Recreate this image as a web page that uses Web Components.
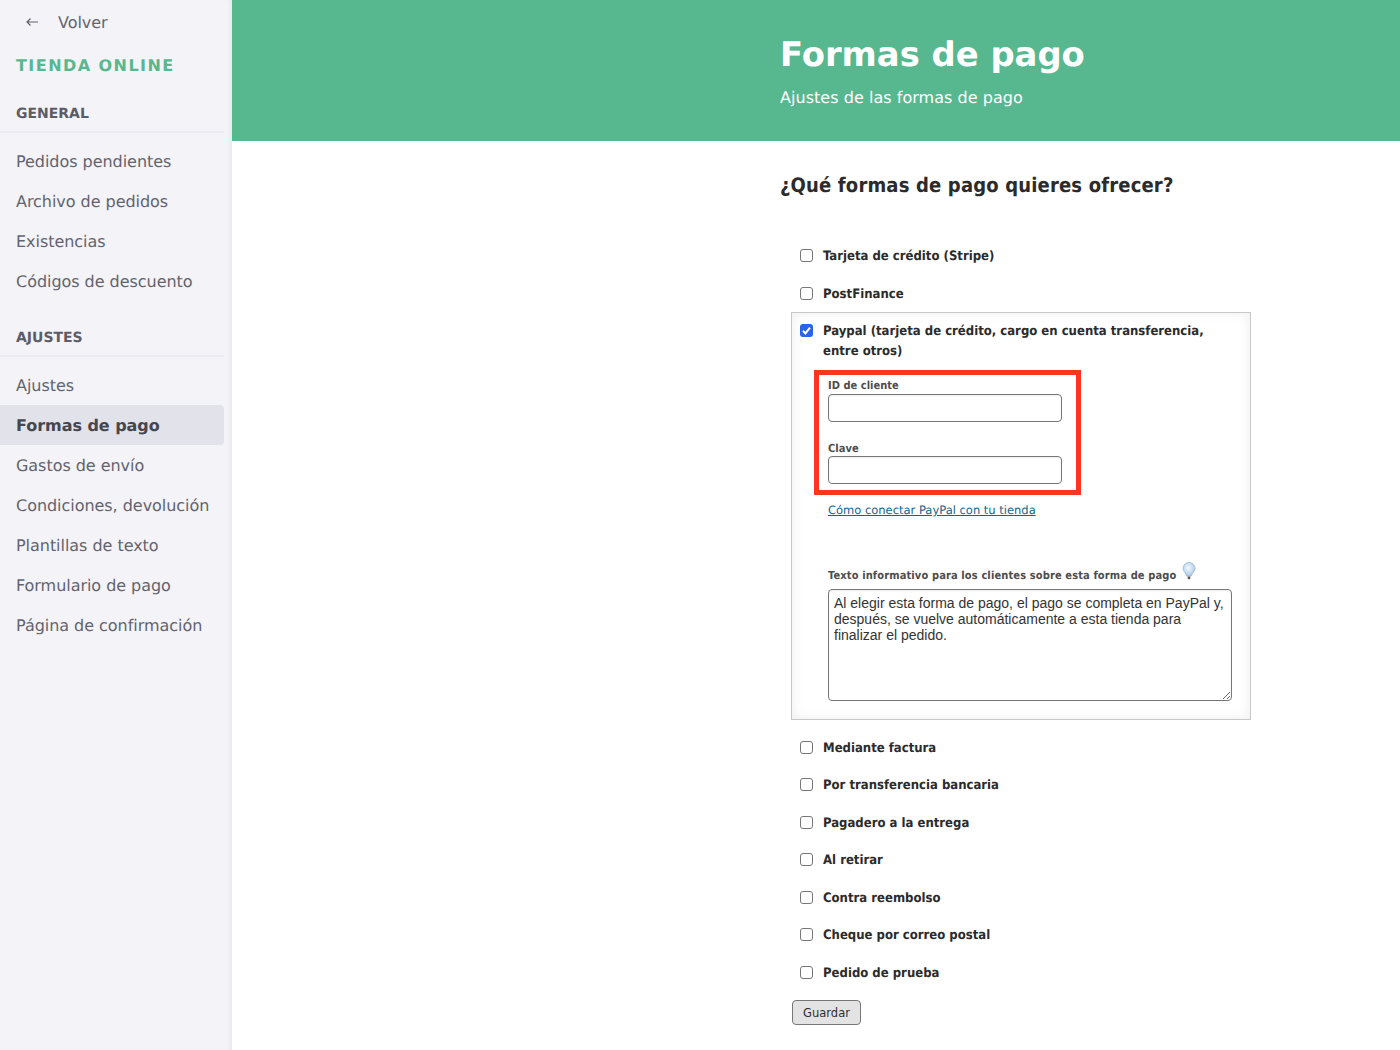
<!DOCTYPE html>
<html lang="es">
<head>
<meta charset="utf-8">
<title>Formas de pago</title>
<style>
  html, body { margin: 0; height: 100%; }
  body { font-family: "DejaVu Sans", sans-serif; text-rendering: geometricPrecision; background: #fff; overflow: hidden; }
  shop-app { height: 1050px; }
</style>
</head>
<body>
<shop-app>
  <shop-sidebar slot="sidebar">
    <back-link>Volver</back-link>
    <shop-brand>TIENDA ONLINE</shop-brand>
    <nav-section title="GENERAL">
      <nav-item>Pedidos pendientes</nav-item>
      <nav-item>Archivo de pedidos</nav-item>
      <nav-item>Existencias</nav-item>
      <nav-item>Códigos de descuento</nav-item>
    </nav-section>
    <nav-section title="AJUSTES">
      <nav-item>Ajustes</nav-item>
      <nav-item active>Formas de pago</nav-item>
      <nav-item>Gastos de envío</nav-item>
      <nav-item>Condiciones, devolución</nav-item>
      <nav-item>Plantillas de texto</nav-item>
      <nav-item>Formulario de pago</nav-item>
      <nav-item>Página de confirmación</nav-item>
    </nav-section>
  </shop-sidebar>
  <page-header slot="header" title="Formas de pago" subtitle="Ajustes de las formas de pago"></page-header>
  <payment-form slot="content">
    <pay-option>Tarjeta de crédito (Stripe)</pay-option>
    <pay-option>PostFinance</pay-option>
    <paypal-panel></paypal-panel>
    <pay-option>Mediante factura</pay-option>
    <pay-option>Por transferencia bancaria</pay-option>
    <pay-option>Pagadero a la entrega</pay-option>
    <pay-option>Al retirar</pay-option>
    <pay-option>Contra reembolso</pay-option>
    <pay-option>Cheque por correo postal</pay-option>
    <pay-option>Pedido de prueba</pay-option>
  </payment-form>
</shop-app>

<script>
const CHECK_CSS = `
  input[type=checkbox] {
    appearance: none; -webkit-appearance: none;
    box-sizing: border-box; width: 13px; height: 13px; margin: 0; flex: none;
    background: #fff; border: 1px solid #767676; border-radius: 3px;
  }
  input[type=checkbox]:checked {
    border: 0; background-color: #2b62ea; background-position: center; background-repeat: no-repeat;
    background-image: url("data:image/svg+xml,%3Csvg xmlns='http://www.w3.org/2000/svg' width='13' height='13'%3E%3Cpath d='M3 6.800l2.400 2.600L10 3.600' fill='none' stroke='white' stroke-width='2'/%3E%3C/svg%3E");
  }
`;
const LABEL_FONT = `"DejaVu Sans Condensed", "DejaVu Sans", sans-serif`;

class ShopApp extends HTMLElement {
  constructor() {
    super();
    this.attachShadow({ mode: 'open' }).innerHTML = `
      <style>
        :host { display: grid; grid-template-columns: 232px 1fr; width: 1400px; }
        .side { display: flex; }
        .main { display: flex; flex-direction: column; min-width: 0; }
      </style>
      <div class="side"><slot name="sidebar"></slot></div>
      <div class="main"><slot name="header"></slot><slot name="content"></slot></div>
    `;
  }
}

class ShopSidebar extends HTMLElement {
  constructor() {
    super();
    this.attachShadow({ mode: 'open' }).innerHTML = `
      <style>
        :host { display: block; width: 232px; box-sizing: border-box; background: #f3f3f8; padding-right: 8px; box-shadow: inset -4px 0 4px -2px rgba(0,0,0,.05); }
      </style>
      <slot></slot>
    `;
  }
}

class BackLink extends HTMLElement {
  constructor() {
    super();
    this.attachShadow({ mode: 'open' }).innerHTML = `
      <style>
        :host { display: flex; align-items: center; height: 44px; padding-left: 26px; gap: 20px; font-size: 16px; letter-spacing: -.03px; color: #63636d; }
        svg { width: 12px; height: 10px; flex: none; }
      </style>
      <svg viewBox="0 0 12 10"><path d="M12 5H1M4.500 1.500L1 5l3.500 3.500" fill="none" stroke="#63636d" stroke-width="1.200"/></svg>
      <slot></slot>
    `;
  }
}

class ShopBrand extends HTMLElement {
  constructor() {
    super();
    this.attachShadow({ mode: 'open' }).innerHTML = `
      <style>
        :host { display: block; padding: 1px 0 0 16px; margin-bottom: 6px; height: 42px; line-height: 42px; font-size: 16px; font-weight: 700; letter-spacing: 1.45px; color: #57b88f; }
      </style>
      <slot></slot>
    `;
  }
}

class NavSection extends HTMLElement {
  constructor() {
    super();
    this.attachShadow({ mode: 'open' }).innerHTML = `
      <style>
        :host { display: block; margin-bottom: 16px; }
        h2 { margin: 0; padding: 11px 0 6px 16px; height: 21px; line-height: 21px; font-size: 14px; font-weight: 700; color: #5c5c66; border-bottom: 2px solid #ebebf1; }
        .items { padding-top: 8px; }
      </style>
      <h2></h2>
      <div class="items"><slot></slot></div>
    `;
    this.shadowRoot.querySelector('h2').textContent = this.getAttribute('title');
    this.removeAttribute('title');
  }
}

class NavItem extends HTMLElement {
  constructor() {
    super();
    this.attachShadow({ mode: 'open' }).innerHTML = `
      <style>
        :host { display: block; height: 40px; line-height: 41px; padding-left: 16px; font-size: 16px; letter-spacing: -.04px; color: #63636d; border-radius: 0 4px 4px 0; }
        :host([active]) { background: #e2e2eb; color: #46464e; font-weight: 700; }
      </style>
      <slot></slot>
    `;
  }
}

class PageHeader extends HTMLElement {
  constructor() {
    super();
    this.attachShadow({ mode: 'open' }).innerHTML = `
      <style>
        :host { display: block; height: 141px; box-sizing: border-box; background: #57b88f; color: #fff; padding: 34px 0 0 548px; }
        h1 { margin: 0; font-size: 33.8px; line-height: 42px; font-weight: 700; }
        p { margin: 12px 0 0; font-size: 16px; letter-spacing: .04px; line-height: 20px; }
      </style>
      <h1></h1>
      <p></p>
    `;
    this.shadowRoot.querySelector('h1').textContent = this.getAttribute('title');
    this.shadowRoot.querySelector('p').textContent = this.getAttribute('subtitle');
    this.removeAttribute('title');
  }
}

class PaymentForm extends HTMLElement {
  constructor() {
    super();
    this.attachShadow({ mode: 'open' }).innerHTML = `
      <style>
        :host { display: block; padding-left: 548px; color: #2b2b2b; }
        h2 { margin: 0; padding-top: 31px; font-family: ${LABEL_FONT}; font-size: 20px; letter-spacing: .17px; line-height: 26px; font-weight: 700; height: 26px; }
        .options { margin: 39px 0 0 11px; width: 460px; }
        button {
          display: block; margin: 9px 0 0 12px; box-sizing: border-box; width: 69px; height: 25px; padding: 1px 0 0;
          font: 11.5px "DejaVu Sans", sans-serif; color: #2f2f2f;
          background: #e3e3e3; border: 1px solid #777; border-radius: 4px;
        }
      </style>
      <h2>¿Qué formas de pago quieres ofrecer?</h2>
      <div class="options"><slot></slot></div>
      <button type="button">Guardar</button>
    `;
  }
}

class PayOption extends HTMLElement {
  constructor() {
    super();
    this.attachShadow({ mode: 'open' }).innerHTML = `
      <style>
        :host { display: block; }
        label { display: flex; align-items: center; gap: 10px; height: 37.5px; padding-left: 9px; font-family: ${LABEL_FONT}; font-size: 13px; font-weight: 700; color: #2b2b2b; }
        span { padding-top: 2px; }
        ${CHECK_CSS}
      </style>
      <label><input type="checkbox"><span><slot></slot></span></label>
    `;
  }
}

class PaypalPanel extends HTMLElement {
  constructor() {
    super();
    this.attachShadow({ mode: 'open' }).innerHTML = `
      <style>
        :host {
          display: block; box-sizing: border-box; width: 460px; height: 408px; margin: 0 0 8.5px;
          padding: 8px 8px 0; border: 1px solid #c8c8c8; background: #fff;
          box-shadow: inset 0 0 12px rgba(0,0,0,.07);
        }
        .head { display: flex; gap: 10px; align-items: flex-start; font-family: ${LABEL_FONT}; font-size: 13px; line-height: 20px; font-weight: 700; color: #2b2b2b; }
        .head span { padding-top: 1px; margin-bottom: -1px; }
        .annot { box-sizing: border-box; width: 267px; height: 125px; margin: 9px 0 0 14px; padding: 4px 0 0 9px; border: 5px solid #fb3520; }
        .lbl { display: block; font-family: ${LABEL_FONT}; font-size: 11px; letter-spacing: .03px; line-height: 14px; font-weight: 700; color: #4d4d4d; }
        input[type=text] { display: block; box-sizing: border-box; width: 234px; height: 28px; margin: 1px 0 0; background: #fff; border: 1px solid #777; border-radius: 4px; box-shadow: inset 0 1px 2px rgba(0,0,0,.08); }
        .second { margin-top: 20px; }
        .second input[type=text] { margin-top: 0; }
        a { display: block; margin: 7px 0 0 28px; font-size: 11.5px; line-height: 16px; color: #17628e; text-decoration: underline; }
        .info { display: flex; align-items: flex-end; gap: 6px; margin: 45px 0 0 28px; height: 19px; }
        .info .lbl { letter-spacing: .13px; margin-bottom: -1px; }
        svg { width: 14px; height: 18px; margin-bottom: 2px; }
        textarea {
          display: block; box-sizing: border-box; width: 404px; height: 112px; margin: 7px 0 0 28px; padding: 5px;
          font: 14px/16px "Liberation Sans", Arial, sans-serif; color: #333; background: #fff;
          border: 1px solid #777; border-radius: 4px; box-shadow: inset 0 1px 2px rgba(0,0,0,.08); outline: 0;
        }
        ${CHECK_CSS}
        .head input[type=checkbox] { margin-top: 3px; }
      </style>
      <label class="head"><input type="checkbox" checked><span>Paypal (tarjeta de crédito, cargo en cuenta transferencia, entre otros)</span></label>
      <div class="annot">
        <label class="lbl">ID de cliente<input type="text"></label>
        <label class="lbl second">Clave<input type="text"></label>
      </div>
      <a href="#">Cómo conectar PayPal con tu tienda</a>
      <div class="info">
        <label class="lbl">Texto informativo para los clientes sobre esta forma de pago</label>
        <svg viewBox="0 0 14 18">
          <defs><radialGradient id="bulb" cx=".45" cy=".4" r=".7"><stop offset="0" stop-color="#f4f9fd"/><stop offset="1" stop-color="#9cc2e2"/></radialGradient></defs>
          <path d="M7 .5a6 6 0 0 0-6 6c0 2.800 3 4.200 3.700 7.500h4.600C10 10.700 13 9.300 13 6.500a6 6 0 0 0-6-6z" fill="url(#bulb)" stroke="#94b6d3" stroke-width=".8"/>
          <path d="M5.700 14.500h2.600v1.900l-.6.800H6.300l-.6-.8z" fill="#555"/>
        </svg>
      </div>
      <textarea>Al elegir esta forma de pago, el pago se completa en PayPal y, después, se vuelve automáticamente a esta tienda para finalizar el pedido.</textarea>
    `;
  }
}

customElements.define('shop-app', ShopApp);
customElements.define('shop-sidebar', ShopSidebar);
customElements.define('back-link', BackLink);
customElements.define('shop-brand', ShopBrand);
customElements.define('nav-section', NavSection);
customElements.define('nav-item', NavItem);
customElements.define('page-header', PageHeader);
customElements.define('payment-form', PaymentForm);
customElements.define('pay-option', PayOption);
customElements.define('paypal-panel', PaypalPanel);
</script>
</body>
</html>
